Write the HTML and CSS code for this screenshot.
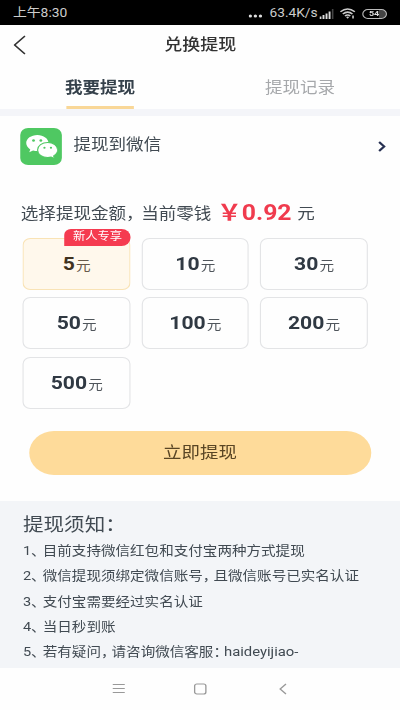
FILE: index.html
```html
<!DOCTYPE html>
<html lang="zh-CN">
<head>
<meta charset="utf-8">
<title>兑换提现</title>
<link rel="stylesheet" href="styles.css">
</head>
<body>
<div class="screen">
  <div class="status">
    <span class="time">上午8:30</span>
    <svg class="status-dots" width="12" height="4" viewBox="0 0 12 4" fill="#ddd"><circle cx="1.5" cy="2" r="1.5"/><circle cx="6" cy="2" r="1.5"/><circle cx="10.5" cy="2" r="1.5"/></svg>
    <span class="speed">63.4K/s</span>
    <svg class="signal" width="13" height="10" viewBox="0 0 13 10"><path d="M0 7.5h1.7V10H0zM2.7 6h1.7v4H2.7zM5.4 4.4h1.7V10H5.4zM8.1 2.4h1.7V10H8.1z" fill="#ddd"/><path d="M11 0h1.4v10H11z" fill="#444"/></svg>
    <svg class="wifi" width="15" height="11" viewBox="0 0 15 11" fill="none" stroke="#ccc" stroke-width="1.5"><path d="M.6 3.7Q7 -1.8 13.4 3.7M2.7 6Q7 2.3 11.3 6M4.6 8Q7 6 9.4 8"/><path d="M5.6 9.1Q7 8 8.4 9.1L7 10.8z" fill="#ccc" stroke="none"/><path d="M11.8 7.6v3" stroke-width="1.4"/></svg>
    <span class="battery"><b>54</b></span>
  </div>
  <header class="header">
    <svg class="back" width="11" height="20" viewBox="0 0 11 20" fill="none" stroke="#333" stroke-width="1.5"><path d="M10.2 1L1 10l9.2 9"/></svg>
    <h1>兑换提现</h1>
  </header>
  <nav class="tabs">
    <div class="tab active">我要提现</div>
    <div class="tab">提现记录</div>
  </nav>
  <main class="content">
    <div class="method">
      <div class="wechat">
        <svg width="28" height="25" viewBox="0 0 28 25">
          <path d="M10.2 1C4.7 1 .3 4.6.3 9.1c0 2.6 1.4 4.8 3.6 6.3L3 18.2l3.4-1.7c1.2.4 2.5.6 3.8.6 5.5 0 9.9-3.6 9.9-8S15.7 1 10.2 1z" fill="#fff"/>
          <path d="M19.4 8.5c-5 0-9 3.4-9 7.5s4 7.5 9 7.5c1.1 0 2.2-.2 3.1-.5l3 1.6-.8-2.7c2.2-1.4 3.6-3.5 3.6-5.9 0-4.1-4-7.5-8.9-7.5z" fill="#fff" stroke="#4fc862" stroke-width="1"/>
          <g fill="#4fc862"><circle cx="6.8" cy="6.6" r="1.25"/><circle cx="13.3" cy="6.6" r="1.25"/><circle cx="16.5" cy="13.7" r="1"/><circle cx="22.3" cy="13.7" r="1"/></g>
        </svg>
      </div>
      <span class="method-name">提现到微信</span>
      <svg class="go" width="7" height="11" viewBox="0 0 7 11" fill="none" stroke="#273052" stroke-width="2"><path d="M1 1l4.500 4.500L1 10"/></svg>
    </div>
    <div class="balance"><span class="label">选择提现金额，</span><span>当前零钱</span><b class="yen">￥</b><b class="money">0.92</b><span>元</span></div>
    <div class="grid">
      <div class="amount selected"><b>5</b>元<span class="badge">新人专享</span></div>
      <div class="amount"><b>10</b>元</div>
      <div class="amount"><b>30</b>元</div>
      <div class="amount"><b>50</b>元</div>
      <div class="amount"><b>100</b>元</div>
      <div class="amount"><b>200</b>元</div>
      <div class="amount"><b>500</b>元</div>
    </div>
    <div class="submit">立即提现</div>
  </main>
  <section class="notes">
    <h2>提现须知：</h2>
    <p><i>1、</i>目前支持微信红包和支付宝两种方式提现</p>
    <p><i>2、</i>微信提现须绑定微信账号<span class="comma">，</span>且微信账号已实名认证</p>
    <p><i>3、</i>支付宝需要经过实名认证</p>
    <p><i>4、</i>当日秒到账</p>
    <p><i>5、</i>若有疑问<span class="comma">，</span>请咨询微信客服<span class="comma">：</span><span class="account">haideyijiao-</span></p>
  </section>
  <footer class="navbar">
    <svg width="11" height="11" viewBox="0 0 11 11" stroke="#999" stroke-width="1"><path d="M0 1.500h11M0 5.500h11M0 9.500h11"/></svg>
    <svg width="12" height="12" viewBox="0 0 12 12" fill="none" stroke="#999" stroke-width="1.200"><rect x="1" y="1" width="10" height="10" rx="2"/></svg>
    <svg width="7" height="12" viewBox="0 0 7 12" fill="none" stroke="#999" stroke-width="1.200"><path d="M6.200 1L1 6l5.200 5"/></svg>
  </footer>
</div>
</body>
</html>
```
FILE: styles.css
```css
* { box-sizing: border-box; margin: 0; padding: 0; }
html, body { width: 400px; height: 710px; overflow: hidden; background: #fefefe; }
body { font-family: Roboto, "Noto Sans CJK SC", sans-serif; color: #414a52; }

/* Narrow layout widened to fill the window */
.screen {
  width: 355.56px;
  height: 710px;
  display: flex;
  flex-direction: column;
  transform: scaleX(1.125);
  transform-origin: 0 0;
}
svg { display: block; flex: none; }

.status {
  height: 25px;
  flex: none;
  background: #000;
  color: #ccc;
  display: flex;
  align-items: center;
  padding: 2px 12px 0 11.5px;
  font-size: 12.3px;
  line-height: 23px;
}
.time { flex: 1; }
.status-dots { margin: 4px 7px 0 0; }
.speed { width: 42px; white-space: nowrap; font-size: 12.2px; }
.signal { margin-left: 2px; }
.wifi { margin-left: 5px; }
.battery {
  width: 22px;
  height: 10px;
  margin-left: 5px;
  border: 1px solid #bbb;
  border-radius: 5px;
  background: linear-gradient(90deg, #000 70%, #444 70%);
  color: #ddd;
  font-size: 8px;
  line-height: 8px;
  text-align: center;
}

.header { height: 40px; flex: none; display: flex; align-items: center; padding-left: 11.5px; }
.header h1 { flex: 1; font-size: 16px; font-weight: 500; line-height: 24px; color: #333; text-align: center; padding-right: 22px; }

.tabs { height: 44px; flex: none; display: flex; }
.tab {
  flex: 1;
  display: flex;
  flex-direction: column;
  align-items: center;
  padding-top: 11px;
  font-size: 15.6px;
  line-height: 24px;
  color: #a6a8ab;
}
.tab.active { color: #35414b; font-weight: 700; }
.tab.active::after { content: ""; width: 59.5px; height: 3px; margin-top: 6px; background: #f9d797; }

.content { height: 392px; flex: none; border-top: 7px solid #f4f5f9; }
.method { height: 60px; display: flex; align-items: center; padding: 0 13px 0 18px; }
.wechat {
  width: 37.3px;
  height: 37px;
  border-radius: 7px;
  background: #4fc862;
  display: flex;
  align-items: center;
  justify-content: center;
}
.method-name { flex: 1; padding-left: 10px; font-size: 15.6px; line-height: 24px; margin-top: -2px; }
.balance {
  height: 36px;
  margin-top: 20px;
  padding-left: 18.5px;
  display: flex;
  align-items: center;
  font-size: 15.6px;
  line-height: 36px;
  white-space: nowrap;
}
.label { width: 107px; }
.yen { color: #f03b4e; font-size: 22px; margin-left: 5px; width: 22px; padding-bottom: 3px; }
.money { color: #f03b4e; font-size: 22px; margin-right: 5px; padding-bottom: 3px; }

.grid {
  display: grid;
  grid-template-columns: repeat(3, 95.6px);
  grid-auto-rows: 52px;
  gap: 7.4px 9.9px;
  margin: 6px 0 0 20.4px;
}
.amount {
  position: relative;
  display: flex;
  align-items: baseline;
  justify-content: center;
  border: 1px solid #e3e4e6;
  border-radius: 7px;
  font-size: 13px;
  line-height: 51px;
  color: #50565c;
}
.amount b { font-size: 18.8px; color: #303943; margin-right: 1px; }
.selected { background: #fff8ec; border-color: #f9e3b5; color: #67594a; }
.selected b { color: #40321f; }
.badge {
  position: absolute;
  right: -1px;
  top: -10px;
  width: 58.5px;
  height: 17px;
  border-radius: 6px 8px 8px 0;
  background: #f53b50;
  color: #fff;
  font-size: 10.9px;
  line-height: 16px;
  text-align: center;
}
.submit {
  height: 44px;
  margin: 22.2px 25.8px 0;
  border-radius: 22px;
  background: #fedb9a;
  color: #594524;
  font-size: 16.4px;
  line-height: 43px;
  text-align: center;
}

.notes { height: 167px; flex: none; background: #f3f5f8; padding: 10px 0 0 20.4px; white-space: nowrap; }
.notes h2 { font-size: 18.3px; font-weight: 400; line-height: 27px; }
.notes p { font-size: 12.95px; line-height: 25.35px; }
.notes i { display: inline-block; width: 17.6px; font-style: normal; font-feature-settings: "halt"; }
.comma { display: inline-block; width: 9.4px; font-feature-settings: "halt"; }
.account { font-size: 13.2px; }

.navbar { height: 42px; flex: none; display: flex; align-items: center; padding: 0 0 1px 99.5px; }
.navbar svg:nth-child(2) { margin: 0 64.5px 0 61.3px; }
```
